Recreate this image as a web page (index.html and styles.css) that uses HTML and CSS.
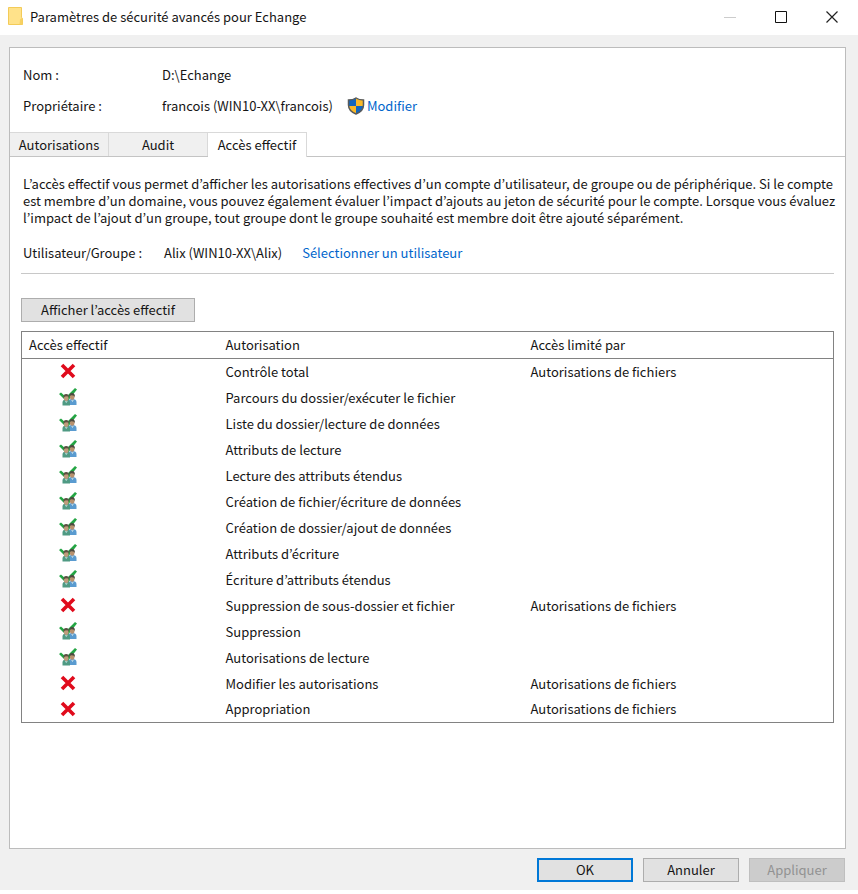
FILE: index.html
```html
<!DOCTYPE html>
<html lang="fr">
<head>
<meta charset="utf-8">
<meta name="viewport" content="width=device-width, initial-scale=1">
<title>Paramètres de sécurité avancés pour Echange</title>
<link rel="stylesheet" href="styles.css">
</head>
<body>
<svg class="sprites" aria-hidden="true">
  <symbol id="denied" viewBox="0 0 18 18"><path d="M3 3 15 15M15 3 3 15" fill="none" stroke="#e00b1c" stroke-width="3.600"/></symbol>
  <symbol id="granted" viewBox="0 0 18 18">
    <path d="M0 6 2 4.500 7 9 16 0 18 1.500 8 14Z" fill="#24a544"/>
    <path d="M9 17V13.500Q9 11 13 11Q17.500 11 17.500 14V17Z" fill="#5a9bd0"/>
    <path d="M3.500 17.500V14.500Q3.500 11.500 7 11.500Q11 11.500 11 14.500V17.500Z" fill="#4f9a83"/>
    <ellipse cx="13.200" cy="9" rx="2.300" ry="2.800" fill="#b8916f"/>
    <path d="M10.200 8.500Q10 5 13 5Q16.200 5 15.800 9L14.500 7.500 12 7.300Z" fill="#4d4a40"/>
    <ellipse cx="7.200" cy="10" rx="2.400" ry="2.900" fill="#c09b7c"/>
    <path d="M4.500 10Q4 6 7.200 6Q10.300 6 9.800 10L8.500 8.200 6 8.400Z" fill="#5a5143"/>
    <path d="M6.500 13 7.300 14.500 8.200 13M12.700 12 13.500 13.500 14.200 12" fill="none" stroke="#d7e8ea" stroke-width=".8"/>
  </symbol>
</svg>
<div class="window">
  <header class="titlebar">
    <svg class="folder" viewBox="0 0 16 19" aria-hidden="true"><path d="M.5.5H13.500V10.500L14.500 11.500V17.500H.5Z" fill="#ffe28a" stroke="#f3cb58"/><path d="M12 12.500 14.500 10.500V17.500H11.500Z" fill="#f7d163"/></svg>
    <h1 class="title">Paramètres de sécurité avancés pour Echange</h1>
    <div class="window-controls">
      <button type="button" class="control" aria-label="Réduire" disabled><svg viewBox="0 0 12 12"><path d="M0 6.500H12" stroke="#ccc"/></svg></button>
      <button type="button" class="control" aria-label="Agrandir"><svg viewBox="0 0 12 12"><path d="M.5.5H11.500V11.500H.5Z" fill="none" stroke="#111"/></svg></button>
      <button type="button" class="control" aria-label="Fermer"><svg viewBox="0 0 12 12"><path d="M.5.5 11.500 11.500M11.500.5.5 11.500" fill="none" stroke="#222" stroke-width="1.200"/></svg></button>
    </div>
  </header>
  <div class="client">
    <main class="sheet">
      <dl class="summary">
        <dt>Nom :</dt><dd>D:\Echange</dd>
        <dt>Propriétaire :</dt>
        <dd>francois (WIN10-XX\francois)
          <a class="link owner" href="#modifier"><svg class="shield" viewBox="0 0 18 18" aria-hidden="true"><path d="M9 1Q12 3 16.500 3V8Q16.500 14 9 17Q1.500 14 1.500 8V3Q6 3 9 1Z" fill="#f9b928"/><path d="M9 1V9H1.500V3Q6 3 9 1ZM9 9H16.500Q16 14 9 17Z" fill="#1266bd"/><path d="M9 1Q12 3 16.500 3V8Q16.500 14 9 17Q1.500 14 1.500 8V3Q6 3 9 1Z" fill="none" stroke="#585a5b" stroke-width="1.500"/></svg>Modifier</a></dd>
      </dl>
      <div class="tabs" role="tablist">
        <button type="button" role="tab" class="tab" aria-selected="false">Autorisations</button>
        <button type="button" role="tab" class="tab" aria-selected="false">Audit</button>
        <button type="button" role="tab" class="tab" aria-selected="true">Accès effectif</button>
      </div>
      <section class="panel">
        <p class="intro">L’accès effectif vous permet d’afficher les autorisations effectives d’un compte d’utilisateur, de groupe ou de périphérique. Si le compte est membre d’un domaine, vous pouvez également évaluer l’impact d’ajouts au jeton de sécurité pour le compte. Lorsque vous évaluez l’impact de l’ajout d’un groupe, tout groupe dont le groupe souhaité est membre doit être ajouté séparément.</p>
        <div class="subject"><span class="subject-label">Utilisateur/Groupe :</span><span>Alix (WIN10-XX\Alix)</span><a class="link" href="#utilisateur">Sélectionner un utilisateur</a></div>
        <button type="button" class="button show">Afficher l’accès effectif</button>
        <table class="access">
          <thead><tr><th scope="col">Accès effectif</th><th scope="col">Autorisation</th><th scope="col">Accès limité par</th></tr></thead>
          <tbody>
            <tr><td><svg class="status" role="img" aria-label="Refusé"><use href="#denied"/></svg></td><td>Contrôle total</td><td>Autorisations de fichiers</td></tr>
            <tr><td><svg class="status" role="img" aria-label="Accordé"><use href="#granted"/></svg></td><td>Parcours du dossier/exécuter le fichier</td><td></td></tr>
            <tr><td><svg class="status" role="img" aria-label="Accordé"><use href="#granted"/></svg></td><td>Liste du dossier/lecture de données</td><td></td></tr>
            <tr><td><svg class="status" role="img" aria-label="Accordé"><use href="#granted"/></svg></td><td>Attributs de lecture</td><td></td></tr>
            <tr><td><svg class="status" role="img" aria-label="Accordé"><use href="#granted"/></svg></td><td>Lecture des attributs étendus</td><td></td></tr>
            <tr><td><svg class="status" role="img" aria-label="Accordé"><use href="#granted"/></svg></td><td>Création de fichier/écriture de données</td><td></td></tr>
            <tr><td><svg class="status" role="img" aria-label="Accordé"><use href="#granted"/></svg></td><td>Création de dossier/ajout de données</td><td></td></tr>
            <tr><td><svg class="status" role="img" aria-label="Accordé"><use href="#granted"/></svg></td><td>Attributs d’écriture</td><td></td></tr>
            <tr><td><svg class="status" role="img" aria-label="Accordé"><use href="#granted"/></svg></td><td>Écriture d’attributs étendus</td><td></td></tr>
            <tr><td><svg class="status" role="img" aria-label="Refusé"><use href="#denied"/></svg></td><td>Suppression de sous-dossier et fichier</td><td>Autorisations de fichiers</td></tr>
            <tr><td><svg class="status" role="img" aria-label="Accordé"><use href="#granted"/></svg></td><td>Suppression</td><td></td></tr>
            <tr><td><svg class="status" role="img" aria-label="Accordé"><use href="#granted"/></svg></td><td>Autorisations de lecture</td><td></td></tr>
            <tr><td><svg class="status" role="img" aria-label="Refusé"><use href="#denied"/></svg></td><td>Modifier les autorisations</td><td>Autorisations de fichiers</td></tr>
            <tr><td><svg class="status" role="img" aria-label="Refusé"><use href="#denied"/></svg></td><td>Appropriation</td><td>Autorisations de fichiers</td></tr>
          </tbody>
        </table>
      </section>
    </main>
    <footer class="actions">
      <button type="button" class="button primary">OK</button>
      <button type="button" class="button">Annuler</button>
      <button type="button" class="button" disabled>Appliquer</button>
    </footer>
  </div>
</div>
</body>
</html>
```
FILE: styles.css
```css
* { box-sizing: border-box; }
body {
  margin: 0;
  background: #fff;
  color: #151515;
  font: 13px/17px "Noto Sans CJK JP", "Open Sans", sans-serif;
}
button { font: inherit; color: inherit; }
.sprites { position: absolute; width: 0; height: 0; }
.window {
  min-height: 100vh;
  display: flex;
  flex-direction: column;
  padding-bottom: 4px;
}
.titlebar {
  display: flex;
  align-items: center;
  height: 35px;
  padding: 0 1px 2px 8px;
}
.folder { width: 16px; height: 19px; margin-right: 6px; }
.title { margin: 0; font-size: 13px; font-weight: 400; }
.window-controls { display: flex; margin-left: auto; }
.control {
  display: flex;
  align-items: center;
  justify-content: center;
  width: 51px;
  height: 33px;
  padding: 0;
  border: 0;
  background: none;
}
.control svg { width: 12px; height: 12px; }
.client {
  flex: 1;
  display: flex;
  flex-direction: column;
  padding: 12px 12px 8px 9px;
  background: #f0f0f0;
}
.sheet {
  flex: 1;
  border: 1px solid #bcbcbc;
  background: #fff;
}
.summary {
  display: grid;
  grid-template-columns: 139px 1fr;
  row-gap: 14px;
  margin: 0;
  padding: 18px 13px 17px;
}
.summary dd { display: flex; margin: 0; }
.link { color: #0066cc; text-decoration: none; }
.owner { display: flex; margin-left: 14px; }
.shield { width: 18px; height: 18px; margin-right: 2px; }
.tabs { display: flex; height: 25px; border-bottom: 1px solid #c4c4c4; }
.tab {
  width: 99px;
  height: 24px;
  padding: 0 0 1px;
  border: 1px solid #d9d9d9;
  border-width: 1px 1px 0 0;
  background: #f0f0f0;
}
.tab[aria-selected="true"] { height: 25px; padding-bottom: 2px; background: #fff; }
.panel { padding: 18px 11px 0; }
.intro { margin: 0 -8px 18px 2px; }
.subject {
  display: flex;
  gap: 20px;
  padding: 0 2px 12px;
  border-bottom: 1px solid #c8c8c8;
}
.subject-label { width: 121px; white-space: nowrap; }
.button {
  width: 96px;
  height: 24px;
  padding: 0 0 1px;
  border: 1px solid #adadad;
  background: #e1e1e1;
}
.show { display: block; width: 174px; margin: 24px 0 9px; }
.access {
  width: 100%;
  border: 1px solid #828282;
  border-collapse: collapse;
  table-layout: fixed;
}
.access th {
  height: 27px;
  padding: 0 0 2px 7px;
  border-bottom: 1px solid #828282;
  font-weight: 400;
  text-align: left;
}
.access th:nth-child(1) { width: 197px; }
.access th:nth-child(2) { width: 305px; }
.access td { height: 26px; padding: 0 0 1px 7px; }
.access td:first-child { padding-left: 37px; }
.status { display: block; width: 18px; height: 18px; }
.actions {
  display: flex;
  justify-content: flex-end;
  gap: 10px;
  padding: 9px 1px 0 0;
}
.button.primary { border: 2px solid #0078d7; }
.button:disabled { border-color: #bfbfbf; background: #ccc; color: #929292; }
```
